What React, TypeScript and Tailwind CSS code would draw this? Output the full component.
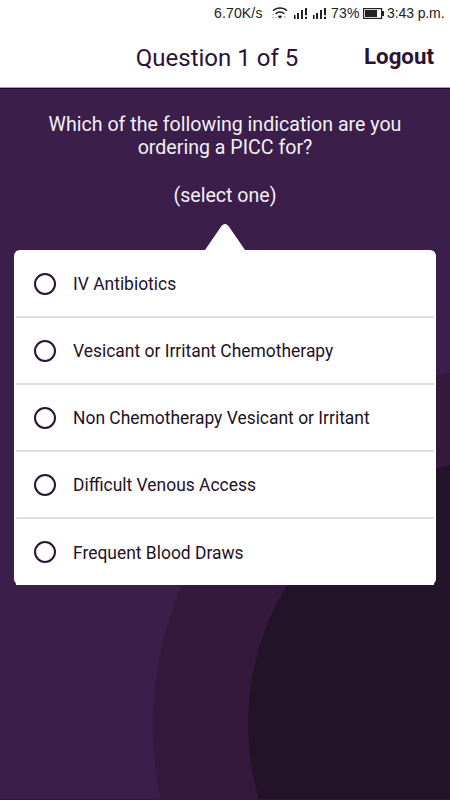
const options = [
  "IV Antibiotics",
  "Vesicant or Irritant Chemotherapy",
  "Non Chemotherapy Vesicant or Irritant",
  "Difficult Venous Access",
  "Frequent Blood Draws",
];

function WifiIcon() {
  return (
    <svg width="16" height="12" viewBox="0 0 16 12" fill="none" stroke="#222" strokeWidth="1.5" className="ml-[9px] shrink-0">
      <path d="M1 3.8C4.6 0.2 11.4 0.2 15 3.8" />
      <path d="M3.6 6.8C6 4.5 10 4.5 12.4 6.8" />
      <path d="M0.5 7.5h1.4M0.5 10.5h1.4M3.4 10.5h1.2M12.8 9v2" stroke="#999" strokeWidth="1" />
      <path d="M5.8 9.2Q8 7.8 10.2 9.2L8 11.8Z" fill="#222" stroke="none" />
    </svg>
  );
}

function SignalIcon({ className }: { className: string }) {
  return (
    <svg width="14" height="11" viewBox="0 0 14 11" fill="#222" className={className}>
      <rect x="0" y="7" width="1.6" height="4" />
      <rect x="3" y="5" width="2" height="6" />
      <rect x="7" y="2" width="2" height="9" />
      <rect x="11" y="0" width="2" height="7.2" />
      <rect x="11" y="8.8" width="2" height="2.2" />
    </svg>
  );
}

function StatusBar() {
  return (
    <div className="flex h-[26px] items-center pl-[214px] font-['Liberation_Sans',Arial,sans-serif] text-[14px] whitespace-nowrap text-[#222]">
      <span className="w-[49px] shrink-0 tracking-[0.15px]">6.70K/s</span>
      <WifiIcon />
      <SignalIcon className="ml-[6px] shrink-0" />
      <SignalIcon className="ml-[5px] shrink-0" />
      <span className="ml-1 w-[30px] shrink-0 tracking-[0.2px]">73%</span>
      <svg width="21" height="11" viewBox="0 0 21 11" className="ml-[2px] shrink-0">
        <rect x="0.6" y="0.6" width="18" height="9.8" fill="#fff" stroke="#222" strokeWidth="1.2" />
        <rect x="2" y="2" width="12" height="7" fill="#222" />
        <rect x="19" y="3" width="2" height="5" fill="#222" />
      </svg>
      <span className="ml-[3px] tracking-[-0.1px]">3:43 p.m.</span>
    </div>
  );
}

export default function App() {
  return (
    <div className="relative h-[800px] w-[450px] overflow-hidden border-b border-[#3c1830] bg-[#3b1f4a] font-[Roboto,sans-serif]">
      {/* background rings */}
      <svg width="450" height="800" className="absolute inset-0">
        <circle cx="512" cy="726" r="359" fill="#34193d" />
        <circle cx="515" cy="724" r="267" fill="#231329" />
      </svg>

      <div className="relative">
        <header className="h-[88px] border-b border-[#a79bac] bg-white text-[#2b1236]">
          <StatusBar />
          <div className="grid h-[61px] grid-cols-[1fr_auto_1fr] items-center pt-0.5 pr-4">
            <h1 className="col-start-2 text-2xl">Question 1 of 5</h1>
            <button className="justify-self-end pb-0.5 text-[22.3px] font-bold">Logout</button>
          </div>
        </header>
        <div className="h-px bg-[#1f0a33]" />

        <div className="pt-[24px] text-center text-[19.6px] leading-[23px] text-[#f4eff6]">
          <p>
            Which of the following indication are you
            <br />
            ordering a PICC for?
          </p>
          <p className="mt-[25px]">(select one)</p>
        </div>

        <svg width="40" height="27" viewBox="0 0 40 27" fill="#fff" className="mx-auto mt-[16px] block">
          <path d="M0 27L16.5 3Q20 -1 23.5 3L40 27Z" />
        </svg>

        <ul className="mx-[14px] h-[335px] rounded-md bg-white px-0.5 pt-px">
          {options.map((option) => (
            <li
              key={option}
              className="flex h-[67px] items-center border-b-2 border-[#e0e0e0] bg-white pl-[18px] text-[17.45px] text-[#1f1226] last:h-[66px] last:border-b-0"
            >
              <span className="mr-[17px] size-[22px] rounded-full border-2 border-[#2b1236]" />
              <span className="pt-0.5">{option}</span>
            </li>
          ))}
        </ul>
      </div>
    </div>
  );
}
